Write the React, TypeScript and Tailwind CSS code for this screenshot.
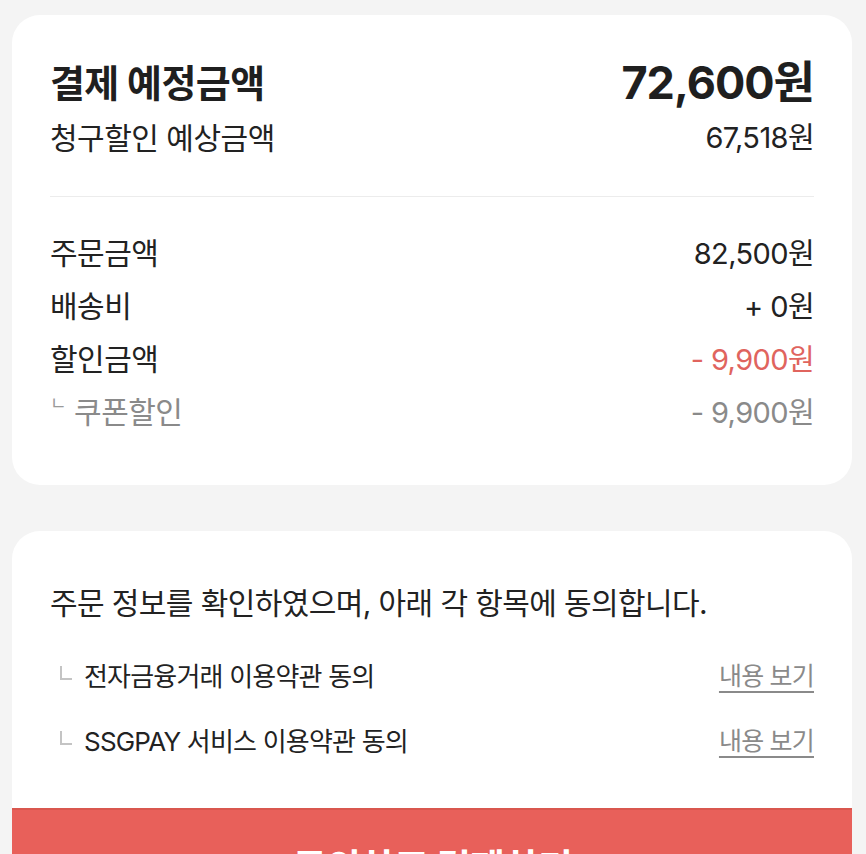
const font = "font-['Inter','Noto_Sans_CJK_KR',sans-serif]";

function Row({
  label,
  value,
  tone = "normal",
}: {
  label: React.ReactNode;
  value: string;
  tone?: "normal" | "red" | "gray";
}) {
  const valueColor =
    tone === "red" ? "text-[#e0645e]" : tone === "gray" ? "text-[#8a8a8a]" : "text-[#222]";
  const labelColor = tone === "gray" ? "text-[#8a8a8a]" : "text-[#222]";
  return (
    <div className="flex h-[53px] items-center justify-between">
      <span className={`text-[30px] tracking-[-0.5px] ${labelColor}`}>{label}</span>
      <span className={`text-[29px] tracking-[-0.6px] ${valueColor}`}>{value}</span>
    </div>
  );
}

function Term({ text }: { text: string }) {
  return (
    <div className="flex h-[65px] items-center justify-between">
      <div className="flex items-center">
        <span className="mb-[8px] ml-[10px] mr-[12px] h-[14px] w-[12px] border-b-2 border-l-2 border-[#c4c4c4]" />
        <span className="text-[26px] tracking-[-0.8px] text-[#222]">{text}</span>
      </div>
      <a className="text-[25px] tracking-[-0.8px] text-[#8a8a8a] underline underline-offset-[6px] decoration-[1.5px]">
        내용 보기
      </a>
    </div>
  );
}

export default function App() {
  return (
    <div className={`min-h-screen bg-[#f4f4f4] pl-[12px] pr-[14px] pt-[15px] ${font}`}>
      <div className="rounded-[28px] bg-white px-[38px] pb-[46px] pt-[46px]">
        <div className="flex h-[44px] items-center justify-between text-[#1f1f1f]">
          <h1 className="text-[38px] font-bold tracking-[-0.6px]">결제 예정금액</h1>
          <span className="text-[45px] font-bold tracking-[-1px]">72,600원</span>
        </div>
        <div className="mt-[15px] flex h-[36px] items-center justify-between tracking-[-0.5px] text-[#222]">
          <span className="text-[30px]">청구할인 예상금액</span>
          <span className="text-[29px] tracking-[-0.6px]">67,518원</span>
        </div>
        <div className="mt-[40px] h-px bg-[#ececec]" />
        <div className="mt-[30px]">
          <Row label="주문금액" value="82,500원" />
          <Row label="배송비" value="+ 0원" />
          <Row label="할인금액" value="- 9,900원" tone="red" />
          <Row
            label={
              <>
                <span className="mr-[8px] align-top text-[18px] text-[#9a9a9a]">ㄴ</span>쿠폰할인
              </>
            }
            value="- 9,900원"
            tone="gray"
          />
        </div>
      </div>

      <div className="mt-[46px] overflow-hidden rounded-t-[28px] bg-white">
        <div className="px-[38px] pb-[34px] pt-[54px]">
          <p className="flex h-[36px] items-center text-[30px] tracking-[-0.6px] text-[#222]">
            주문 정보를 확인하였으며, 아래 각 항목에 동의합니다.
          </p>
          <div className="mt-[23px]">
            <Term text="전자금융거래 이용약관 동의" />
            <Term text="SSGPAY 서비스 이용약관 동의" />
          </div>
        </div>
        <button className="flex h-[116px] w-full items-center justify-center border-t-2 border-[#d9574f] bg-[#e8605a] text-[38px] font-bold tracking-[-1px] text-white">
          동의하고 결제하기
        </button>
      </div>
    </div>
  );
}
